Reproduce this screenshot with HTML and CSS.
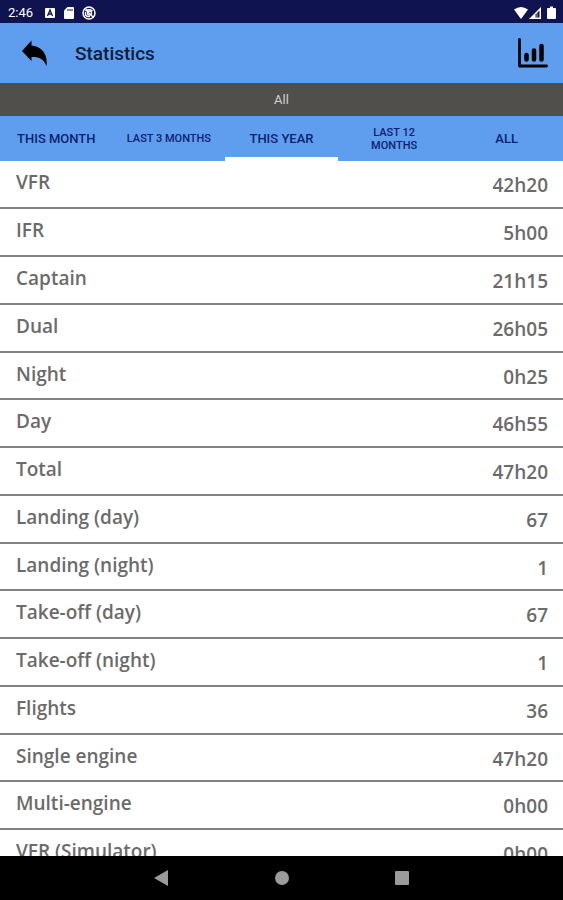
FILE: index.html
```html
<!DOCTYPE html>
<html lang="en">
<head>
    <meta charset="UTF-8">
    <meta name="viewport" content="width=device-width, initial-scale=1.0">
    <title>Statistics</title>
    <link rel="stylesheet" href="styles.css">
</head>
<body>

<div class="status-bar">
    <span class="clock">2:46</span>
    <svg class="status-icon" width="12" height="12" viewBox="0 0 12 12">
        <rect x="1" y="1" width="10" height="10" rx="1" fill="#fff"/>
        <path d="M3.500 9 L6 3 L8.500 9 M4.500 7 H7.500" fill="none" stroke="#0f1350" stroke-width="1.300"/>
    </svg>
    <svg class="status-icon" width="12" height="12" viewBox="0 0 12 12">
        <path d="M4.500 0 H10 Q11 0 11 1 V11 Q11 12 10 12 H2 Q1 12 1 11 V3.500 Z" fill="#fff"/>
        <path d="M5 2 V4 M7 2 V4 M9 2 V4" stroke="#0f1350" stroke-width="1"/>
    </svg>
    <svg class="status-icon" width="14" height="14" viewBox="0 0 14 14" fill="none" stroke="#fff">
        <circle cx="7" cy="7" r="6" stroke-width="1.500"/>
        <path d="M3.500 5 Q7 2.500 10.500 5 M3.500 6 V9 Q5 11 8 10.500 M3.500 3.500 L11 11" stroke-width="1.400"/>
        <circle cx="7.500" cy="7" r="2" stroke-width="1.400"/>
    </svg>
    <svg class="system-icons" width="44" height="14" viewBox="0 0 44 14">
        <path d="M1 3.500 Q8 -1.500 15 3.500 L8 13 Z" fill="#fff"/>
        <path d="M16 13 L28 1 V13 Z" fill="#fff"/>
        <path d="M22.500 11.500 V8.500 L26.500 4.500 V11.500 Z" fill="#0f1350"/>
        <path d="M24 7 V11.500" stroke="#fff" stroke-width="0.600"/>
        <path d="M35 2 H37 V0.500 H40 V2 H42 Q43 2 43 3 V12 Q43 13 42 13 H35 Q34 13 34 12 V3 Q34 2 35 2 Z" fill="#fff"/>
    </svg>
</div>

<header class="app-bar">
    <button class="icon-btn" aria-label="Back">
        <svg width="26" height="26" viewBox="0 0 26 26">
            <path d="M1 11 L10.500 0.500 V5.500 C20 6.500 27 13 25.500 26 C22.500 18.500 18 17 10.500 17 V21 Z" fill="#000"/>
        </svg>
    </button>
    <h1>Statistics</h1>
    <button class="icon-btn chart-btn" aria-label="Chart">
        <svg width="32" height="32" viewBox="0 0 32 32" fill="none" stroke="#000" stroke-linecap="round">
            <path d="M2.500 2.500 V29 H29.500" stroke-width="2.800" stroke-linejoin="round"/>
            <path d="M9.500 18 V22.500 M17 13.500 V22.500 M24.500 9 V22.500" stroke-width="4.500"/>
        </svg>
    </button>
</header>

<button class="filter">All</button>

<nav class="tabs">
    <a href="#month">THIS MONTH</a>
    <a href="#last3" class="small">LAST 3 MONTHS</a>
    <a href="#year" class="active">THIS YEAR</a>
    <a href="#last12" class="small">LAST 12 MONTHS</a>
    <a href="#all">ALL</a>
</nav>

<main class="stats">
    <table>
        <tr><th scope="row">VFR</th><td>42h20</td></tr>
        <tr><th scope="row">IFR</th><td>5h00</td></tr>
        <tr><th scope="row">Captain</th><td>21h15</td></tr>
        <tr><th scope="row">Dual</th><td>26h05</td></tr>
        <tr><th scope="row">Night</th><td>0h25</td></tr>
        <tr><th scope="row">Day</th><td>46h55</td></tr>
        <tr><th scope="row">Total</th><td>47h20</td></tr>
        <tr><th scope="row">Landing (day)</th><td>67</td></tr>
        <tr><th scope="row">Landing (night)</th><td>1</td></tr>
        <tr><th scope="row">Take-off (day)</th><td>67</td></tr>
        <tr><th scope="row">Take-off (night)</th><td>1</td></tr>
        <tr><th scope="row">Flights</th><td>36</td></tr>
        <tr><th scope="row">Single engine</th><td>47h20</td></tr>
        <tr><th scope="row">Multi-engine</th><td>0h00</td></tr>
        <tr><th scope="row">VFR (Simulator)</th><td>0h00</td></tr>
    </table>
</main>

<footer class="nav-bar">
    <button aria-label="Back">
        <svg width="16" height="16" viewBox="0 0 16 16"><path d="M0 8 L14 0 V16 Z" fill="#9b9b9b"/></svg>
    </button>
    <button aria-label="Home">
        <svg width="16" height="16" viewBox="0 0 16 16"><circle cx="8" cy="8" r="7" fill="#9b9b9b"/></svg>
    </button>
    <button aria-label="Recent apps">
        <svg width="16" height="16" viewBox="0 0 16 16"><rect x="1" y="1" width="14" height="14" rx="1" fill="#9b9b9b"/></svg>
    </button>
</footer>

</body>
</html>
```
FILE: styles.css
```css
* {
    box-sizing: border-box;
}
body {
    font-family: Roboto, sans-serif;
    margin: 0;
    height: 100vh;
    display: flex;
    flex-direction: column;
    background-color: white;
}
button {
    font-family: inherit;
    border: none;
    padding: 0;
    background: none;
}
svg {
    display: block;
}
.status-bar {
    display: flex;
    align-items: center;
    flex: none;
    height: 23px;
    padding: 2px 6px 0 8px;
    background-color: #0f1350;
    color: white;
}
.clock {
    font-size: 13px;
    margin-right: 4px;
}
.status-icon {
    margin-left: 7px;
}
.system-icons {
    margin-left: auto;
}
.app-bar {
    display: flex;
    align-items: center;
    flex: none;
    height: 60px;
    padding: 0 14px 0 21px;
    background-color: #5f9eee;
}
.app-bar h1 {
    margin: 0 0 0 28px;
    font-size: 19px;
    font-weight: 500;
    color: #0b1c38;
}
.chart-btn {
    margin-left: auto;
}
.filter {
    flex: none;
    height: 33px;
    background-color: #514f4c;
    color: #cfcfcf;
    font-size: 13px;
}
.tabs {
    display: grid;
    grid-template-columns: repeat(5, 1fr);
    flex: none;
    height: 45px;
    background-color: #5f9eee;
}
.tabs a {
    display: flex;
    align-items: center;
    justify-content: center;
    padding: 4px 12px 0;
    border-bottom: 4px solid transparent;
    font-size: 13px;
    line-height: 13px;
    font-weight: 500;
    text-align: center;
    text-decoration: none;
    white-space: nowrap;
    color: #0b1f6e;
}
.tabs .small {
    font-size: 11px;
    white-space: normal;
}
.tabs .active {
    border-bottom-color: white;
}
.stats {
    flex: 1;
    min-height: 0;
    overflow: hidden;
}
.stats table {
    width: 100%;
    border-collapse: collapse;
}
.stats tr {
    height: 48px;
    border-bottom: 2px solid #828282;
}
.stats tr:nth-child(4n + 1) {
    height: 47px;
}
.stats th,
.stats td {
    font-family: "Open Sans", sans-serif;
    font-size: 19px;
    line-height: 24px;
    font-weight: 600;
    color: #6b6b6b;
    vertical-align: top;
}
.stats th {
    padding: 9px 0 0 16px;
    text-align: left;
}
.stats td {
    padding: 12px 15px 0 0;
    text-align: right;
}
.nav-bar {
    display: flex;
    align-items: center;
    justify-content: center;
    gap: 104px;
    flex: none;
    height: 44px;
    background-color: black;
}
```
